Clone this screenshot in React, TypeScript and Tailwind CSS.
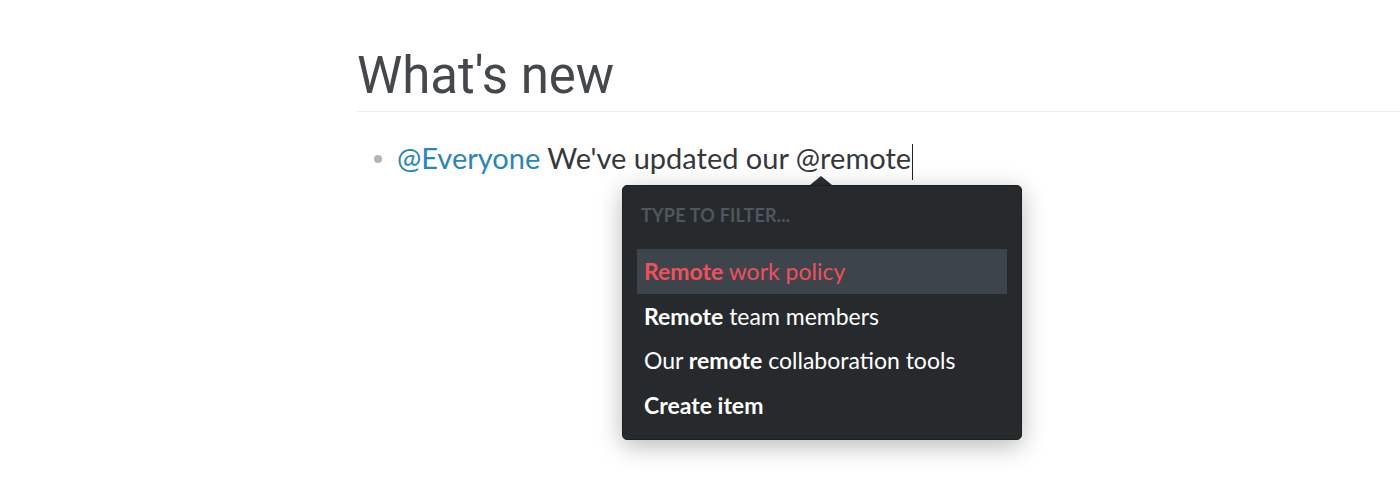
import React from "react";

export default function App() {
  const body = { fontFamily: "Lato, 'Noto Sans', sans-serif" };
  return (
    <div className="w-[1400px] h-[500px] bg-white overflow-hidden">
      <div className="relative pl-[356px] pt-[44px]">
        <h1
          className="text-[51px] leading-[64px] text-[#44484c] pl-[1px] pb-[3px] border-b border-[#ececec] font-normal"
          style={{ fontFamily: "Roboto, sans-serif" }}
        >
          What's new
        </h1>
        <div className="flex items-center pt-[26px] pl-[18px]" style={body}>
          <span className="w-[8px] h-[8px] rounded-full bg-[#b3b6b9] mr-[15px]" />
          <div className="text-[29px] leading-[40px] text-[#35393d]">
            <span className="text-[#2a86ba]">@Everyone</span> We've updated our @remote
            <span className="inline-block w-[1px] h-[36px] bg-[#222] align-middle ml-[1px]" />
          </div>
        </div>
        <div className="absolute left-[622px] top-[185px] w-[400px]" style={body}>
          <div className="relative">
            <div className="absolute left-[188px] top-[-9px] w-0 h-0 border-l-[11px] border-r-[11px] border-b-[9px] border-l-transparent border-r-transparent border-b-[#272a2d]" />
            <div className="rounded-[5px] bg-[#272a2d] border border-[#1d1f21] shadow-[0_6px_24px_rgba(0,0,0,0.28)] px-[14px] pt-[17px] pb-[12px]">
              <div className="text-[18px] leading-[24px] font-bold text-[#4f5760] px-[4px] tracking-[0.2px]">
                TYPE TO FILTER...
              </div>
              <div className="mt-[22px] flex flex-col text-[23px] leading-[44.5px] text-white">
                <div className="bg-[#3e444b] px-[7px] text-[#f0505c]">
                  <b>Remote</b> work policy
                </div>
                <div className="px-[7px]">
                  <b>Remote</b> team members
                </div>
                <div className="px-[7px]">
                  Our <b>remote</b> collaboration tools
                </div>
                <div className="px-[7px] font-bold">Create item</div>
              </div>
            </div>
          </div>
        </div>
      </div>
    </div>
  );
}
